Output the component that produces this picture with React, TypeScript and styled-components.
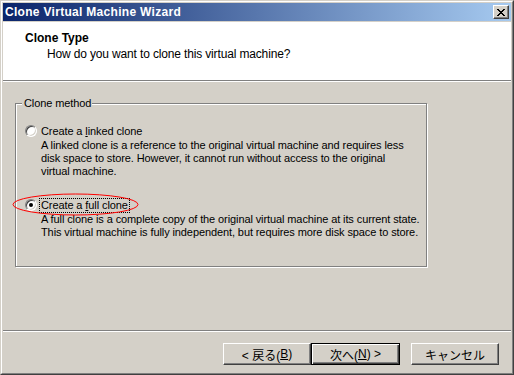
import React from "react";
import styled, { createGlobalStyle } from "styled-components";

const GlobalStyle = createGlobalStyle`
  html, body {
    margin: 0;
    padding: 0;
    background: #d4d0c8;
  }
  body {
    font-family: "Liberation Sans", Arial, "Noto Sans CJK JP", sans-serif;
    font-size: 11px;
    letter-spacing: -0.1px;
    color: #000;
  }
`;

const uiFont = `"Liberation Sans", Arial, "Noto Sans CJK JP", sans-serif`;

// classic 3D window frame
const WindowFrame = styled.div`
  width: 514px;
  height: 375px;
  box-sizing: border-box;
  border-top: 1px solid #d4d0c8;
  border-left: 1px solid #d4d0c8;
  border-right: 1px solid #404040;
  border-bottom: 1px solid #404040;
`;

const WindowInner = styled.div`
  height: 100%;
  box-sizing: border-box;
  border-top: 1px solid #fff;
  border-left: 1px solid #fff;
  border-right: 1px solid #808080;
  border-bottom: 1px solid #808080;
  padding: 1px;
  display: flex;
  flex-direction: column;
  background: #d4d0c8;
`;

const TitleBar = styled.div`
  height: 18px;
  flex: none;
  display: flex;
  align-items: center;
  justify-content: space-between;
  padding: 0 2px;
  background: linear-gradient(to right, #0a246a, #a6caf0);
  color: #fff;
  font-weight: bold;
  font-size: 12px;
  letter-spacing: 0.3px;
`;

const CloseButton = styled.div`
  width: 16px;
  height: 14px;
  box-sizing: border-box;
  background: #d4d0c8;
  border-top: 1px solid #fff;
  border-left: 1px solid #fff;
  border-right: 1px solid #404040;
  border-bottom: 1px solid #404040;
  box-shadow: inset -1px -1px 0 #808080;
  display: flex;
  align-items: center;
  justify-content: center;
`;

const Header = styled.div`
  margin-top: 1px;
  height: 59px;
  flex: none;
  box-sizing: border-box;
  background: #fff;
  border-bottom: 1px solid #808080;
  box-shadow: 0 1px 0 #fff;
  padding: 9px 0 0 22px;
`;

const HeaderTitle = styled.div`
  font-weight: bold;
  font-size: 12px;
  letter-spacing: 0;
  line-height: 14px;
`;

const HeaderSub = styled.div`
  margin-top: 2px;
  padding-left: 22px;
  font-size: 12px;
  letter-spacing: -0.15px;
  line-height: 14px;
`;

const Body = styled.div`
  flex: 1;
  padding: 22px 0 0 12px;
  position: relative;
`;

const GroupBox = styled.div`
  position: relative;
  width: 412px;
  height: 164px;
  box-sizing: border-box;
  border: 1px solid #808080;
  box-shadow: 1px 1px 0 #fff, inset 1px 1px 0 #fff;
  padding: 20px 0 0 9px;
`;

const Legend = styled.span`
  position: absolute;
  top: -8px;
  left: 6px;
  padding: 0 1px 0 2px;
  line-height: 14px;
  background: #d4d0c8;
`;

const Option = styled.div<{ $gap?: number }>`
  margin-top: ${(p) => p.$gap ?? 0}px;
`;

const OptionRow = styled.div`
  display: flex;
  align-items: center;
  height: 14px;
`;

const Radio = styled.span<{ $checked?: boolean }>`
  width: 12px;
  height: 12px;
  box-sizing: border-box;
  border-radius: 50%;
  background: #fff;
  border: 1px solid;
  border-color: #808080 #fff #fff #808080;
  box-shadow: inset 1px 1px 0 #404040, inset -1px -1px 0 #d4d0c8;
  position: relative;
  flex: none;
  &::after {
    content: "";
    display: ${(p) => (p.$checked ? "block" : "none")};
    position: absolute;
    left: 3px;
    top: 3px;
    width: 4px;
    height: 4px;
    border-radius: 50%;
    background: #000;
  }
`;

const OptionLabel = styled.span<{ $focused?: boolean }>`
  margin-left: 3px;
  padding: 0 1px;
  line-height: 13px;
  outline: ${(p) => (p.$focused ? "1px dotted #000" : "none")};
`;

const Description = styled.div`
  padding-left: 16px;
  margin-top: 1px;
  line-height: 13px;
  white-space: nowrap;
`;

const Highlight = styled.svg`
  position: absolute;
  left: 9px;
  top: 112px;
  pointer-events: none;
`;

const Footer = styled.div`
  height: 42px;
  flex: none;
  margin-top: auto;
  box-sizing: border-box;
  border-top: 1px solid #808080;
  box-shadow: inset 0 1px 0 #fff;
  display: flex;
  justify-content: flex-end;
  padding: 12px 12px 0 0;
`;

const Button = styled.button<{ $default?: boolean; $gapLeft?: number }>`
  width: ${(p) => (p.$default ? 89 : 88)}px;
  height: 22px;
  margin-left: ${(p) => p.$gapLeft ?? 0}px;
  box-sizing: border-box;
  background: #d4d0c8;
  font-family: ${uiFont};
  font-size: 12px;
  color: #000;
  padding: 0;
  border: 1px solid;
  border-color: ${(p) => (p.$default ? "#000" : "#fff #404040 #404040 #fff")};
  box-shadow: ${(p) =>
    p.$default
      ? "inset 1px 1px 0 #fff, inset -1px -1px 0 #404040, inset -2px -2px 0 #808080"
      : "inset -1px -1px 0 #808080"};
  display: flex;
  align-items: center;
  justify-content: center;
`;

const Key = styled.span`
  text-decoration: underline;
`;

const XIcon = () => (
  <svg width="8" height="7" viewBox="0 0 8 7" shapeRendering="crispEdges">
    <path
      d="M0 0h2v1h-2zM6 0h2v1h-2zM1 1h2v1h-2zM5 1h2v1h-2zM2 2h4v1h-4zM3 3h2v1h-2zM2 4h4v1h-4zM1 5h2v1h-2zM5 5h2v1h-2zM0 6h2v1h-2zM6 6h2v1h-2z"
      fill="#000"
    />
  </svg>
);

export default function App() {
  return (
    <>
      <GlobalStyle />
      <WindowFrame>
        <WindowInner>
          <TitleBar>
            <span>Clone Virtual Machine Wizard</span>
            <CloseButton>
              <XIcon />
            </CloseButton>
          </TitleBar>
          <Header>
            <HeaderTitle>Clone Type</HeaderTitle>
            <HeaderSub>How do you want to clone this virtual machine?</HeaderSub>
          </Header>
          <Body>
            <GroupBox>
              <Legend>Clone method</Legend>
              <Option>
                <OptionRow>
                  <Radio />
                  <OptionLabel>
                    Create a <Key>l</Key>inked clone
                  </OptionLabel>
                </OptionRow>
                <Description>
                  A linked clone is a reference to the original virtual machine and requires less
                  <br />
                  disk space to store. However, it cannot run without access to the original
                  <br />
                  virtual machine.
                </Description>
              </Option>
              <Option $gap={20}>
                <OptionRow>
                  <Radio $checked />
                  <OptionLabel $focused>
                    Create a <Key>f</Key>ull clone
                  </OptionLabel>
                </OptionRow>
                <Description>
                  A full clone is a complete copy of the original virtual machine at its current state.
                  <br />
                  This virtual machine is fully independent, but requires more disk space to store.
                </Description>
              </Option>
            </GroupBox>
            <Highlight width="128" height="24" viewBox="0 0 128 24">
              <ellipse cx="63.5" cy="11.5" rx="62.5" ry="10.5" fill="none" stroke="#ff0000" strokeWidth="1" />
            </Highlight>
          </Body>
          <Footer>
            <Button>
              &lt; 戻る(<Key>B</Key>)
            </Button>
            <Button $default>
              次へ(<Key>N</Key>) &gt;
            </Button>
            <Button $gapLeft={11}>キャンセル</Button>
          </Footer>
        </WindowInner>
      </WindowFrame>
    </>
  );
}
